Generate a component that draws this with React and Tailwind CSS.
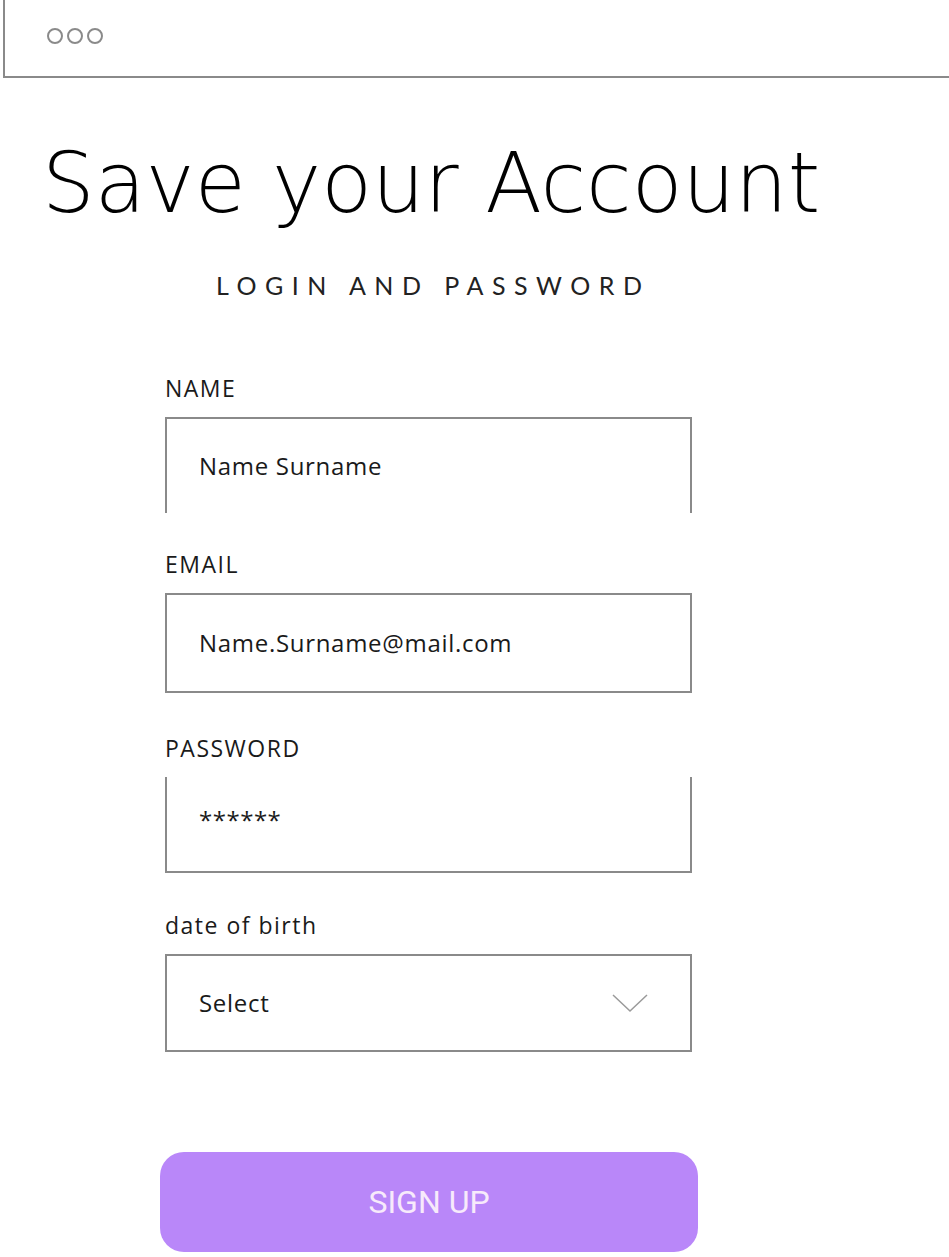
function Field({ label, children, className, boxClass }) {
  return (
    <div className={className}>
      <p className="text-[23px] leading-[24px] tracking-[1.5px] text-[#1a1a1a] mb-[17px]">{label}</p>
      <div className={"w-[527px] flex items-center pl-[32px] pr-[42px] border-[#8a8a8a] " + boxClass}>
        {children}
      </div>
    </div>
  );
}

export default function App() {
  return (
    <div className="w-[949px] min-h-[1257px] bg-white overflow-hidden" style={{ fontFamily: "'Open Sans', 'Liberation Sans', sans-serif" }}>
      <header className="ml-[3px] h-[78px] border-l-2 border-b-2 border-[#8a8a8a] flex items-center pl-[42px]">
        <div className="flex gap-[4px] mt-[-4px]">
          <span className="w-[16px] h-[16px] rounded-full border-2 border-[#8a8a8a]" />
          <span className="w-[16px] h-[16px] rounded-full border-2 border-[#8a8a8a]" />
          <span className="w-[16px] h-[16px] rounded-full border-2 border-[#8a8a8a]" />
        </div>
      </header>

      <h1 className="mt-[56px] pl-[42px] text-[83px] leading-[100px] font-extralight text-black" style={{ fontFamily: "'DejaVu Sans', sans-serif" }}>
        Save your Account
      </h1>

      <p className="mt-[36px] pl-[216px] text-[25px] leading-[30px] tracking-[8.5px] text-[#222]" style={{ fontFamily: "Lato, sans-serif" }}>
        LOGIN AND PASSWORD
      </p>

      <div className="pl-[165px] mt-[76px] flex flex-col">
        <Field label="NAME" boxClass="h-[96px] border-t-2 border-l-2 border-r-2">
          <span className="text-[24px] tracking-[0.7px] text-[#1a1a1a]">Name Surname</span>
        </Field>
        <Field label="EMAIL" className="mt-[39px]" boxClass="h-[100px] border-2">
          <span className="text-[24px] tracking-[0.7px] text-[#1a1a1a]">Name.Surname@mail.com</span>
        </Field>
        <Field label="PASSWORD" className="mt-[43px]" boxClass="h-[96px] border-b-2 border-l-2 border-r-2">
          <span className="text-[24px] tracking-[0.5px] text-[#1a1a1a] mt-[-8px]">******</span>
        </Field>
        <Field label="date of birth" className="mt-[40px]" boxClass="h-[98px] border-2 justify-between">
          <span className="text-[24px] tracking-[0.7px] text-[#1a1a1a]">Select</span>
          <svg width="36" height="20" viewBox="0 0 36 20" fill="none" stroke="#9a9a9a" strokeWidth="1.5">
            <polyline points="1,2 18,18 35,2" />
          </svg>
        </Field>

        <button className="mt-[100px] ml-[-5px] w-[538px] h-[100px] rounded-[24px] bg-[#b987f9] text-[#f7eafb] text-[32px]" style={{ fontFamily: "Roboto, sans-serif" }}>
          SIGN UP
        </button>
      </div>
    </div>
  );
}
